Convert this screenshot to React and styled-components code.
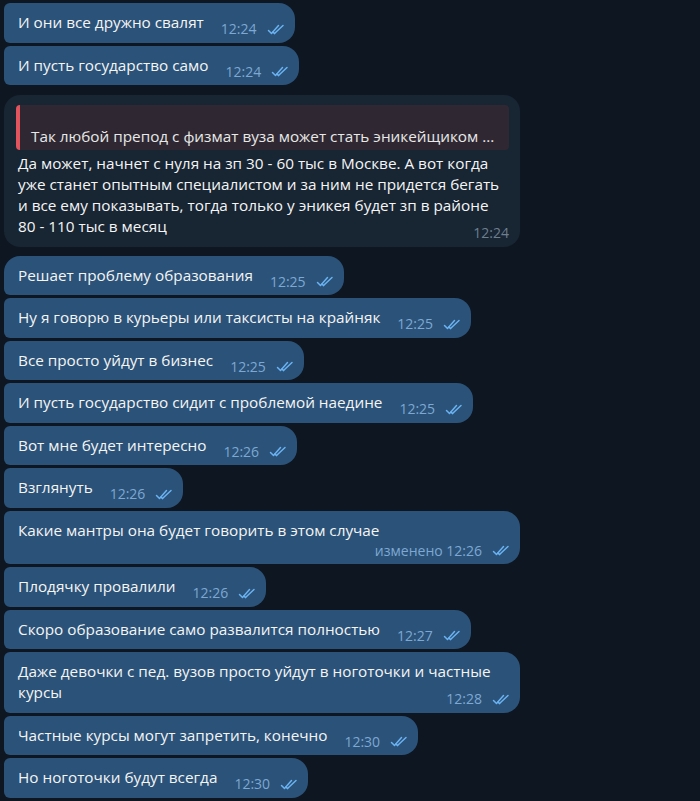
import styled, { createGlobalStyle } from "styled-components";

const GlobalStyle = createGlobalStyle`
	html, body {
		margin: 0;
		padding: 0;
		background: #0e1621;
	}
	body {
		font-family: "Open Sans", "Noto Sans", sans-serif;
		-webkit-font-smoothing: antialiased;
	}
`;

const Chat = styled.div`
	display: flex;
	flex-direction: column;
	align-items: flex-start;
	gap: 3px;
	padding: 3px 0 0 4px;
	height: 801px;
	overflow: hidden;
	box-sizing: border-box;
`;

const Bubble = styled.div`
	box-sizing: border-box;
	max-width: 516px;
	width: ${({ $full }) => ($full ? "516px" : "auto")};
	padding: 9px 10px 5.5px 14px;
	background: #2b5278;
	border-radius: ${({ $top }) => ($top ? "16px" : "6px")} 16px 16px 6px;
	color: #f5f5f5;
	font-size: 15.3px;
	line-height: 21px;
`;

const ReplyBubble = styled(Bubble)`
	margin: 7px 0 6px;
	padding: 10px 11px 5.5px 14px;
	background: #182533;
	border-radius: 16px;
`;

const Quote = styled.div`
	margin: 0 0 3px -2px;
	padding: 0 10px 3px 11px;
	border-left: 4px solid #e2545d;
	border-radius: 4px;
	background: #2f2832;
	color: #e8e8e8;
	white-space: nowrap;
	overflow: hidden;
`;

const QuoteName = styled.div`
	height: 21px;
`;

const Text = styled.div`
	display: flow-root;
`;

const Meta = styled.span`
	float: right;
	display: flex;
	align-items: center;
	gap: 10px;
	height: 16px;
	margin: ${({ $below }) => ($below ? "2px" : "9px")} 0 0 17px;
	font-size: 14px;
	line-height: 16px;
	color: ${({ $in }) => ($in ? "#6d7f8f" : "#7da8d3")};
	white-space: nowrap;
`;

function Checks()
{
	return (
		<svg width="18" height="11" viewBox="0 0 18 11" fill="none"
			stroke="#6ab2f2" strokeWidth="1.5" strokeLinecap="round" strokeLinejoin="round">
			<path d="M1.5 6.5 L4.5 9.5 L11.5 1.5" />
			<path d="M7.5 9.5 L16 1.5" />
			<path d="M6 8 L7.5 9.5" />
		</svg>
	);
}

function Message({ text, time, edited, top, full, below })
{
	return (
		<Bubble $top={top} $full={full}>
			<Text>
				{text}
				<Meta $below={below}>
					<span>{edited ? `изменено ${time}` : time}</span>
					<Checks />
				</Meta>
			</Text>
		</Bubble>
	);
}

const messages = [
	{ text: "Решает проблему образования", time: "12:25", top: true },
	{ text: "Ну я говорю в курьеры или таксисты на крайняк", time: "12:25" },
	{ text: "Все просто уйдут в бизнес", time: "12:25" },
	{ text: "И пусть государство сидит с проблемой наедине", time: "12:25" },
	{ text: "Вот мне будет интересно", time: "12:26" },
	{ text: "Взглянуть", time: "12:26" },
	{ text: "Какие мантры она будет говорить в этом случае", time: "12:26", edited: true, full: true, below: true },
	{ text: "Плодячку провалили", time: "12:26" },
	{ text: "Скоро образование само развалится полностью", time: "12:27" },
	{ text: "Даже девочки с пед. вузов просто уйдут в ноготочки и частные курсы", time: "12:28", full: true },
	{ text: "Частные курсы могут запретить, конечно", time: "12:30" },
	{ text: "Но ноготочки будут всегда", time: "12:30" },
];

export default function App()
{
	return (
		<>
			<GlobalStyle />
			<Chat>
				<Message text="И они все дружно свалят" time="12:24" />
				<Message text="И пусть государство само" time="12:24" />
				<ReplyBubble $full>
					<Quote>
						<QuoteName />
						Так любой препод с физмат вуза может стать эникейщиком ...
					</Quote>
					<Text>
						Да может, начнет с нуля на зп 30 - 60 тыс в Москве. А вот когда<br />
						уже станет опытным специалистом и за ним не придется бегать<br />
						и все ему показывать, тогда только у эникея будет зп в районе<br />
						80 - 110 тыс в месяц
						<Meta $in>
							<span>12:24</span>
						</Meta>
					</Text>
				</ReplyBubble>
				{messages.map((m, i) => <Message key={i} {...m} />)}
			</Chat>
		</>
	);
}
